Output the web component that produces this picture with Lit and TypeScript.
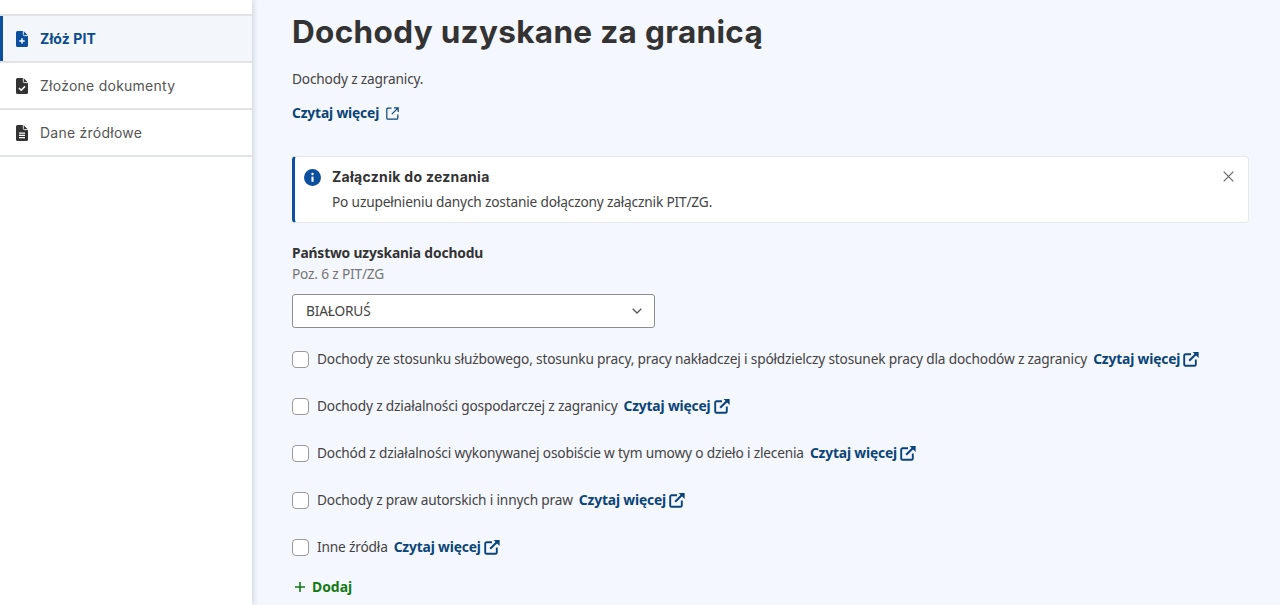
import { LitElement, html, css, svg } from "lit";
import { customElement } from "lit/decorators.js";

const rows = [
  "Dochody ze stosunku służbowego, stosunku pracy, pracy nakładczej i spółdzielczy stosunek pracy dla dochodów z zagranicy",
  "Dochody z działalności gospodarczej z zagranicy",
  "Dochód z działalności wykonywanej osobiście w tym umowy o dzieło i zlecenia",
  "Dochody z praw autorskich i innych praw",
  "Inne źródła",
];

const docShape = "M3.5 0h6L14 4.5V14.5A1.5 1.5 0 0 1 12.5 16h-9A1.5 1.5 0 0 1 2 14.5V1.5A1.5 1.5 0 0 1 3.5 0Z";

const navIcon = (mark: unknown) => html`<svg class="nav-icon" viewBox="2 0 12 16">
  <path d=${docShape} fill="currentColor"></path>
  <path d="M9.3 0v3.6a1 1 0 0 0 1 1H14" fill="none" stroke="#fff" stroke-width=".9"></path>
  ${mark}
</svg>`;

const plusMark = svg`<path d="M8 7.2v5.4M5.3 9.9h5.4" stroke="#fff" stroke-width="1.5" fill="none"></path>`;
const checkMark = svg`<path d="M5 10l2.2 2.2L11 8.4" stroke="#fff" stroke-width="1.5" fill="none"></path>`;
const linesMark = svg`<path d="M5 8.2h6M5 10.4h6M5 12.6h6" stroke="#fff" stroke-width="1.2" fill="none"></path>`;

const solidExternal = html`<svg class="ext-solid" viewBox="0 0 16 16" fill="none" stroke="currentColor">
  <path d="M8 3.2H2.6A1.4 1.4 0 0 0 1.2 4.6v8.8a1.4 1.4 0 0 0 1.4 1.4h8.8a1.4 1.4 0 0 0 1.4-1.4V8.6" stroke-width="1.9"></path>
  <path d="M6.2 9.8 14 2" stroke-width="2.1"></path>
  <path d="M9.6 .9h6v6Z" fill="currentColor" stroke="none"></path>
</svg>`;

@customElement("app-root")
export class AppRoot extends LitElement {
  static styles = css`
    :host {
      display: block;
      height: 605px;
      overflow: hidden;
      background: #f4f7fd;
      font-family: "Noto Sans", "Open Sans", sans-serif;
      color: #444;
    }
    .page {
      display: flex;
      height: 605px;
    }
    .sidebar {
      flex: 0 0 252px;
      box-sizing: border-box;
      background: #fff;
      padding-top: 14px;
      box-shadow: 1px 0 6px rgba(40, 50, 70, 0.2);
    }
    .nav {
      border-top: 2px solid #e2e3e5;
    }
    .nav-item {
      display: flex;
      align-items: center;
      gap: 12px;
      box-sizing: border-box;
      height: 47px;
      padding-left: 16px;
      border-bottom: 2px solid #e2e3e5;
      font-family: Inter, sans-serif;
      font-size: 14px;
      letter-spacing: 0.25px;
      color: #555;
    }
    .nav-item.active {
      background: #f3f6fb;
      color: #0a4b8f;
      font-weight: 700;
      letter-spacing: 0.1px;
      box-shadow: inset 3px 0 0 #0b4f9e;
    }
    .nav-icon {
      width: 12px;
      height: 16px;
      color: #333;
      flex: none;
    }
    .active .nav-icon {
      color: #0b4f9e;
    }
    main {
      flex: 1;
      min-width: 0;
      padding: 0 31px 0 40px;
    }
    h1 {
      margin: 0;
      padding-top: 11px;
      font-family: Inter, sans-serif;
      font-size: 31.5px;
      letter-spacing: 0.32px;
      line-height: 42px;
      font-weight: 700;
      color: #333;
      white-space: nowrap;
    }
    .intro {
      margin: 16px 0 0;
      font-size: 13.7px;
      letter-spacing: -0.175px;
      line-height: 20px;
    }
    .more {
      display: inline-flex;
      align-items: center;
      color: #0a4478;
      font-size: 13.8px;
      letter-spacing: -0.15px;
      font-weight: 700;
      line-height: 20px;
      white-space: nowrap;
    }
    .top-more {
      display: flex;
      gap: 7px;
      margin-top: 14px;
    }
    .ext-thin {
      width: 13px;
      height: 13px;
    }
    .ext-solid {
      width: 16px;
      height: 16px;
      margin-left: 3px;
    }
    .notice {
      position: relative;
      display: flex;
      gap: 11px;
      box-sizing: border-box;
      height: 67px;
      margin-top: 33px;
      padding: 10px 0 0 9px;
      background: #fff;
      border: 1px solid #e6e8ec;
      border-left: 3px solid #0b4f9e;
      border-radius: 4px;
    }
    .info {
      width: 17px;
      height: 17px;
      margin-top: 2px;
      flex: none;
    }
    .notice-title {
      font-family: Inter, sans-serif;
      font-size: 14px;
      letter-spacing: 0.3px;
      font-weight: 700;
      line-height: 20px;
      color: #333;
    }
    .notice-text {
      margin-top: 5px;
      font-size: 13.7px;
      letter-spacing: -0.175px;
      line-height: 20px;
    }
    .close {
      position: absolute;
      top: 14px;
      right: 14px;
      width: 11px;
      height: 11px;
    }
    .field-label {
      margin-top: 20px;
      font-size: 13.8px;
      letter-spacing: -0.15px;
      font-weight: 700;
      line-height: 20px;
      color: #333;
    }
    .field-hint {
      margin-top: 1px;
      font-size: 13.7px;
      letter-spacing: -0.175px;
      line-height: 20px;
      color: #757575;
    }
    .select {
      display: flex;
      align-items: center;
      justify-content: space-between;
      box-sizing: border-box;
      width: 362.5px;
      height: 34px;
      margin-top: 10px;
      padding: 0 12px 1px 13px;
      background: #fff;
      border: 1px solid #8d8d8d;
      border-radius: 3px;
      font-size: 13.7px;
      letter-spacing: -0.175px;
    }
    .chevron {
      width: 10px;
      height: 6px;
    }
    .checks {
      display: flex;
      flex-direction: column;
      gap: 27px;
      margin-top: 21px;
    }
    .check-row {
      display: flex;
      align-items: center;
      height: 20px;
      font-size: 13.7px;
      letter-spacing: -0.175px;
      line-height: 20px;
      white-space: nowrap;
    }
    .box {
      box-sizing: border-box;
      width: 17px;
      height: 17px;
      margin-right: 8px;
      background: #fff;
      border: 1px solid #9a9a9a;
      border-radius: 4px;
      flex: none;
    }
    .check-row .more {
      margin-left: 6px;
    }
    .add {
      display: flex;
      align-items: center;
      gap: 7px;
      margin-top: 20px;
      padding-left: 3px;
      color: #137a13;
      font-size: 13.9px;
      font-weight: 700;
      line-height: 20px;
    }
    .plus {
      width: 10px;
      height: 10px;
    }
  `;

  render() {
    return html`<div class="page">
      <aside class="sidebar">
        <nav class="nav">
          <div class="nav-item active">${navIcon(plusMark)}Złóż PIT</div>
          <div class="nav-item">${navIcon(checkMark)}Złożone dokumenty</div>
          <div class="nav-item">${navIcon(linesMark)}Dane źródłowe</div>
        </nav>
      </aside>
      <main>
        <h1>Dochody uzyskane za granicą</h1>
        <p class="intro">Dochody z zagranicy.</p>
        <div class="more top-more">
          Czytaj więcej
          <svg class="ext-thin" viewBox="0 0 13 13" fill="none" stroke="currentColor" stroke-width="1.2">
            <path d="M5.5 1.2H1.8a1 1 0 0 0-1 1v9a1 1 0 0 0 1 1h9a1 1 0 0 0 1-1V7.5"></path>
            <path d="M8 .8h4.2V5M12.2 .8 5.8 7.2"></path>
          </svg>
        </div>
        <section class="notice">
          <svg class="info" viewBox="0 0 17 17">
            <circle cx="8.5" cy="8.5" r="8.5" fill="#0b4f9e"></circle>
            <circle cx="8.5" cy="5" r="1.2" fill="#fff"></circle>
            <path d="M8.5 7.6v5.2" stroke="#fff" stroke-width="2.1"></path>
          </svg>
          <div>
            <div class="notice-title">Załącznik do zeznania</div>
            <div class="notice-text">Po uzupełnieniu danych zostanie dołączony załącznik PIT/ZG.</div>
          </div>
          <svg class="close" viewBox="0 0 11 11" stroke="#666" stroke-width="1.2">
            <path d="M.7 .7l9.6 9.6M10.3 .7 .7 10.3"></path>
          </svg>
        </section>
        <div class="field-label">Państwo uzyskania dochodu</div>
        <div class="field-hint">Poz. 6 z PIT/ZG</div>
        <div class="select">
          BIAŁORUŚ
          <svg class="chevron" viewBox="0 0 10 6" fill="none" stroke="#555" stroke-width="1.3">
            <path d="M.7 .7 5 5l4.3-4.3"></path>
          </svg>
        </div>
        <div class="checks">
          ${rows.map(
            (label) => html`<div class="check-row">
              <span class="box"></span>${label}
              <span class="more">Czytaj więcej${solidExternal}</span>
            </div>`
          )}
        </div>
        <div class="add">
          <svg class="plus" viewBox="0 0 10 10" stroke="currentColor" stroke-width="1.6">
            <path d="M5 0v10M0 5h10"></path>
          </svg>
          Dodaj
        </div>
      </main>
    </div>`;
  }
}
